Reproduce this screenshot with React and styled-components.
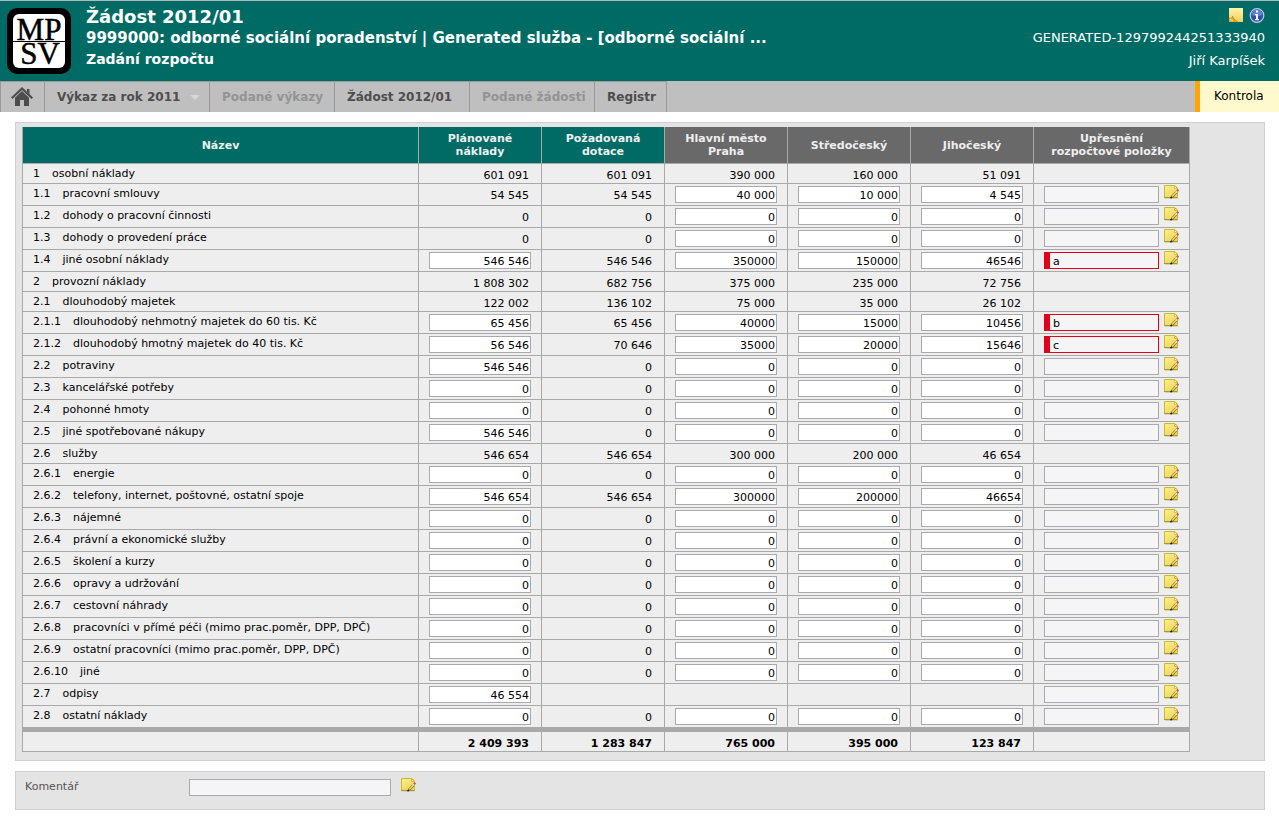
import React from "react";
import styled, { createGlobalStyle, css } from "styled-components";

const GlobalStyle = createGlobalStyle`
  * { box-sizing: border-box; }
  body {
    margin: 0;
    background: #fff;
    color: #000;
    font: 11px/13px Verdana, "DejaVu Sans", sans-serif;
  }
  input, button, h1, h2, p { font: inherit; margin: 0; }
`;

const Header = styled.header`
  display: flex;
  align-items: flex-start;
  height: 81px;
  padding: 7px 14px 0 7px;
  border-top: 1px solid #b4b7bd;
  background: #006b65;
  color: #fff;
`;

const Titles = styled.div`
  flex: 1;
  min-width: 0;
  padding-left: 15px;
  font-weight: bold;
`;

const Title = styled.h1`
  && {
    margin-bottom: 2px;
    font-size: 18px;
    font-weight: bold;
    line-height: 18px;
  }
`;

const Subtitle = styled.h2`
  && {
    font-size: ${(p) => (p.$small ? 14 : 15)}px;
    font-weight: bold;
    line-height: 21px;
  }
  white-space: nowrap;
  overflow: hidden;
  text-overflow: ellipsis;
`;

const UserBox = styled.div`
  font-size: 13px;
  line-height: 23px;
  text-align: right;
`;

const HeaderIcons = styled.div`
  display: flex;
  justify-content: flex-end;
  gap: 5px;
  height: 18px;
`;

const IconButton = styled.button`
  flex: none;
  width: 16px;
  height: 16px;
  padding: 0;
  border: 0;
  background: none;
  cursor: pointer;
  svg { display: block; }
`;

const Nav = styled.nav`
  display: flex;
  height: 31px;
  background: #bfbfbf;
`;

const NavItem = styled.a`
  display: flex;
  align-items: center;
  justify-content: space-between;
  width: ${(p) => p.$width}px;
  padding: 0 ${(p) => (p.$icon ? 10 : 12)}px;
  border-top: 1px solid #999;
  border-right: 1px solid #999;
  color: ${(p) => (p.$muted ? "#939393" : "#4d4d4d")};
  font-size: 12px;
  font-weight: bold;
  text-decoration: none;
  white-space: nowrap;
  &:first-child { border-left: 1px solid #999; }
`;

const Arrow = styled.span`
  border: 5px solid transparent;
  border-top-color: #d6d6d6;
  border-bottom: 0;
  margin-right: -3px;
`;

const CheckLink = styled.a`
  width: 84px;
  margin-left: auto;
  padding-left: 14px;
  border-left: 5px solid #ffa500;
  background: #fffacd;
  color: #000;
  font-size: 12px;
  line-height: 31px;
  text-decoration: none;
`;

const Page = styled.main`
  display: flex;
  flex-direction: column;
  gap: 10px;
  padding: 10px 14px 8px 15px;
`;

const Panel = styled.section`
  padding: 4px 6px 8px;
  border: 1px solid #d0d0d0;
  background: #e4e4e4;
`;

const Table = styled.table`
  width: 100%;
  max-width: 1168px;
  table-layout: fixed;
  border-collapse: separate;
  border-spacing: 0;
  background: #eee;
`;

const cellBorders = css`
  border: 0 solid #a9a9a9;
  border-width: 0 1px 1px 0;
  &:first-child { border-left-width: 1px; }
`;

const HeadCell = styled.th`
  ${cellBorders}
  height: 37px;
  padding: 0 10px;
  background: ${(p) => (p.$region ? "#696969" : "#006b65")};
  color: #eee;
`;

const NameCell = styled.th`
  ${cellBorders}
  padding: 3px 10px 0;
  font-weight: normal;
  text-align: left;
  vertical-align: top;
  white-space: nowrap;
`;

const Code = styled.span`
  margin-right: 12px;
`;

const Cell = styled.td`
  ${cellBorders}
  padding: 0 10px;
  vertical-align: top;
`;

const Row = styled.tr`
  height: ${(p) => (p.$editable ? 22 : 20)}px;
  tbody &:last-child { height: 26px; }
  tbody &:last-child > * { border-bottom-width: 5px; }
`;

const Amount = styled.span`
  display: block;
  padding: 5px 2px 0 0;
  text-align: right;
  font-weight: ${(p) => (p.$total ? "bold" : "normal")};
`;

const Field = styled.input`
  display: block;
  height: 17px;
  border: 1px solid #a9a9b0;
  border-radius: 0;
  outline: 0;
  color: #000;
`;

const NumberField = styled(Field)`
  width: 100%;
  margin: 2px 0;
  padding: 2px 1px 0 2px;
  background: #fff;
  text-align: right;
`;

const NoteField = styled(Field)`
  flex: 1;
  min-width: 0;
  padding: 2px 3px 0;
  background: #f5f5f5;
  ${(p) => p.$invalid && css`
    border-color: #e2001a;
    border-left-width: 6px;
  `}
`;

const Note = styled.div`
  display: flex;
  gap: 4px;
  ${NoteField} { margin: 2px 0; }
`;

const CommentPanel = styled(Panel)`
  display: flex;
  gap: 9px;
  height: 39px;
  padding: 5px 9px;
  color: #555;
`;

const CommentLabel = styled.label`
  width: 155px;
  padding-top: 3px;
`;

const CommentField = styled(NoteField)`
  flex: 0 1 202px;
  margin-top: 2px;
`;

function NoteIcon() {
  return (
    <svg width="16" height="16" viewBox="0 0 16 16" aria-hidden="true">
      <defs>
        <linearGradient id="note" x1="0" y1="0" x2="0.6" y2="1">
          <stop offset="0" stopColor="#fdf08a" />
          <stop offset="1" stopColor="#ecd75e" />
        </linearGradient>
      </defs>
      <path d="M2 14.5H15" stroke="#d6d4c8" />
      <path d="M1.500 1.500H12L14.500 4V13.500H1.500Z" fill="url(#note)" stroke="#cdb63c" />
      <path d="M1 13.500H14.500" stroke="#ad9529" />
      <path d="M11.500 1.500V4.500H14.500Z" fill="#fff8bd" stroke="#cdb63c" strokeWidth="0.8" />
      <path d="M9 12.800L14 7.300" stroke="#8a7420" strokeWidth="2.600" />
      <path d="M9 12.600L13.500 7.700" stroke="#f6dc6a" strokeWidth="1.300" />
      <path d="M13 8.400L14.200 7" stroke="#dfe3ea" strokeWidth="2.200" />
      <path d="M14 7.200L15.300 5.700" stroke="#d9534a" strokeWidth="2.200" />
      <path d="M7.500 14.300L9 12.800" stroke="#111" strokeWidth="1.500" />
    </svg>
  );
}

function StickerIcon() {
  return (
    <svg width="16" height="16" viewBox="0 0 16 16" aria-hidden="true">
      <defs>
        <linearGradient id="sticker" x1="0" y1="0" x2="0" y2="1">
          <stop offset="0" stopColor="#fff3b0" />
          <stop offset="1" stopColor="#f5d05a" />
        </linearGradient>
      </defs>
      <path d="M1 0H15V14H1Z" fill="url(#sticker)" />
      <path d="M1 9.500C3 10 4 9 4.500 8C5 11 7 12.500 9.500 14H1Z" fill="#e0ab2c" />
      <path d="M4.500 8C5 11 7 12.500 9.500 13.500" fill="none" stroke="#a87810" strokeWidth="0.8" />
      <path d="M2 11.500L5 13" stroke="#fbe28a" />
    </svg>
  );
}

function InfoIcon() {
  return (
    <svg width="16" height="16" viewBox="0 0 16 16" aria-hidden="true">
      <circle cx="8" cy="7.500" r="6.800" fill="#2c50b4" stroke="#c3cdea" strokeWidth="1.200" />
      <path d="M2.500 7A5.500 5.500 0 0 1 13.500 7Q8 9 2.500 7Z" fill="#5f82d6" />
      <path d="M7 2.500H9V4.500H7ZM6 6H9V11H10V12.300H6V11H7V7.300H6Z" fill="#fff" />
    </svg>
  );
}

function HomeIcon() {
  return (
    <svg width="22" height="20" viewBox="0 0 22 20" aria-hidden="true">
      <path d="M11 0L22 10.500L20.500 12L11 3L1.500 12L0 10.500Z" fill="#4d4d4d" />
      <path d="M16 2H18.500V7.500L16 5Z" fill="#4d4d4d" />
      <path d="M11 4L18 10.700V19H13V13H9V19H4V10.700Z" fill="#4d4d4d" />
    </svg>
  );
}

function Logo() {
  return (
    <svg width="64" height="66" viewBox="0 0 64 66" role="img" aria-label="MPSV">
      <rect width="64" height="66" rx="10" fill="#000" />
      <rect x="6" y="6" width="52" height="54" rx="6" fill="#fff" />
      <path d="M6 33.500H58" stroke="#000" />
      <text
        fontFamily="'Liberation Serif', serif"
        fontSize="31"
        textAnchor="middle"
        stroke="#000"
        strokeWidth="0.5"
      >
        <tspan x="32" y="32">MP</tspan>
        <tspan x="33" y="56">SV</tspan>
      </text>
    </svg>
  );
}

const COLUMNS = [
  "Plánované náklady",
  "Požadovaná dotace",
  "Hlavní město Praha",
  "Středočeský",
  "Jihočeský",
];

// Amounts starting with "=" are computed and read only; null leaves the cell empty.
const ROWS = [
  ["1", "osobní náklady", ["=601 091", "=601 091", "=390 000", "=160 000", "=51 091"], null],
  ["1.1", "pracovní smlouvy", ["=54 545", "=54 545", "40 000", "10 000", "4 545"], ""],
  ["1.2", "dohody o pracovní činnosti", ["=0", "=0", "0", "0", "0"], ""],
  ["1.3", "dohody o provedení práce", ["=0", "=0", "0", "0", "0"], ""],
  ["1.4", "jiné osobní náklady", ["546 546", "=546 546", "350000", "150000", "46546"], "a"],
  ["2", "provozní náklady", ["=1 808 302", "=682 756", "=375 000", "=235 000", "=72 756"], null],
  ["2.1", "dlouhodobý majetek", ["=122 002", "=136 102", "=75 000", "=35 000", "=26 102"], null],
  ["2.1.1", "dlouhodobý nehmotný majetek do 60 tis. Kč", ["65 456", "=65 456", "40000", "15000", "10456"], "b"],
  ["2.1.2", "dlouhodobý hmotný majetek do 40 tis. Kč", ["56 546", "=70 646", "35000", "20000", "15646"], "c"],
  ["2.2", "potraviny", ["546 546", "=0", "0", "0", "0"], ""],
  ["2.3", "kancelářské potřeby", ["0", "=0", "0", "0", "0"], ""],
  ["2.4", "pohonné hmoty", ["0", "=0", "0", "0", "0"], ""],
  ["2.5", "jiné spotřebované nákupy", ["546 546", "=0", "0", "0", "0"], ""],
  ["2.6", "služby", ["=546 654", "=546 654", "=300 000", "=200 000", "=46 654"], null],
  ["2.6.1", "energie", ["0", "=0", "0", "0", "0"], ""],
  ["2.6.2", "telefony, internet, poštovné, ostatní spoje", ["546 654", "=546 654", "300000", "200000", "46654"], ""],
  ["2.6.3", "nájemné", ["0", "=0", "0", "0", "0"], ""],
  ["2.6.4", "právní a ekonomické služby", ["0", "=0", "0", "0", "0"], ""],
  ["2.6.5", "školení a kurzy", ["0", "=0", "0", "0", "0"], ""],
  ["2.6.6", "opravy a udržování", ["0", "=0", "0", "0", "0"], ""],
  ["2.6.7", "cestovní náhrady", ["0", "=0", "0", "0", "0"], ""],
  ["2.6.8", "pracovníci v přímé péči (mimo prac.poměr, DPP, DPČ)", ["0", "=0", "0", "0", "0"], ""],
  ["2.6.9", "ostatní pracovníci (mimo prac.poměr, DPP, DPČ)", ["0", "=0", "0", "0", "0"], ""],
  ["2.6.10", "jiné", ["0", "=0", "0", "0", "0"], ""],
  ["2.7", "odpisy", ["46 554", null, null, null, null], ""],
  ["2.8", "ostatní náklady", ["0", "=0", "0", "0", "0"], ""],
];

const TOTALS = ["2 409 393", "1 283 847", "765 000", "395 000", "123 847"];

function AmountCell({ value, label }) {
  if (value === null) return <Cell />;
  if (value.startsWith("=")) return <Cell><Amount>{value.slice(1)}</Amount></Cell>;
  return <Cell><NumberField aria-label={label} defaultValue={value} /></Cell>;
}

function BudgetRow({ row: [code, name, amounts, note] }) {
  return (
    <Row $editable={note !== null}>
      <NameCell scope="row"><Code>{code}</Code>{name}</NameCell>
      {amounts.map((value, i) => (
        <AmountCell key={COLUMNS[i]} value={value} label={`${code} ${COLUMNS[i]}`} />
      ))}
      <Cell>
        {note !== null && (
          <Note>
            <NoteField aria-label={`${code} Upřesnění`} defaultValue={note} $invalid={note !== ""} />
            <IconButton type="button" aria-label={`Upravit ${code}`}><NoteIcon /></IconButton>
          </Note>
        )}
      </Cell>
    </Row>
  );
}

export default function App() {
  return (
    <>
      <GlobalStyle />
      <Header>
        <Logo />
        <Titles>
          <Title>Žádost 2012/01</Title>
          <Subtitle>9999000: odborné sociální poradenství | Generated služba - [odborné sociální ...</Subtitle>
          <Subtitle as="p" $small>Zadání rozpočtu</Subtitle>
        </Titles>
        <UserBox>
          <HeaderIcons>
            <IconButton type="button" aria-label="Poznámka"><StickerIcon /></IconButton>
            <IconButton type="button" aria-label="Informace"><InfoIcon /></IconButton>
          </HeaderIcons>
          <div>GENERATED-129799244251333940</div>
          <div>Jiří Karpíšek</div>
        </UserBox>
      </Header>
      <Nav>
        <NavItem href="#domu" $width={45} $icon aria-label="Domů"><HomeIcon /></NavItem>
        <NavItem href="#vykaz" $width={165}>Výkaz za rok 2011<Arrow /></NavItem>
        <NavItem href="#podane-vykazy" $width={125} $muted>Podané výkazy</NavItem>
        <NavItem href="#zadost" $width={135}>Žádost 2012/01</NavItem>
        <NavItem href="#podane-zadosti" $width={125} $muted>Podané žádosti</NavItem>
        <NavItem href="#registr" $width={72}>Registr</NavItem>
        <CheckLink href="#kontrola">Kontrola</CheckLink>
      </Nav>
      <Page>
        <Panel>
          <Table>
            <colgroup>
              <col />
              {COLUMNS.map((c) => <col key={c} width="123" />)}
              <col width="156" />
            </colgroup>
            <thead>
              <tr>
                <HeadCell scope="col">Název</HeadCell>
                {COLUMNS.map((c, i) => <HeadCell key={c} scope="col" $region={i > 1}>{c}</HeadCell>)}
                <HeadCell scope="col" $region>Upřesnění rozpočtové položky</HeadCell>
              </tr>
            </thead>
            <tbody>
              {ROWS.map((row) => <BudgetRow key={row[0]} row={row} />)}
            </tbody>
            <tfoot>
              <Row>
                <Cell />
                {TOTALS.map((t) => <Cell key={t}><Amount $total>{t}</Amount></Cell>)}
                <Cell />
              </Row>
            </tfoot>
          </Table>
        </Panel>
        <CommentPanel>
          <CommentLabel htmlFor="comment">Komentář</CommentLabel>
          <CommentField id="comment" />
          <IconButton type="button" aria-label="Upravit komentář"><NoteIcon /></IconButton>
        </CommentPanel>
      </Page>
    </>
  );
}
